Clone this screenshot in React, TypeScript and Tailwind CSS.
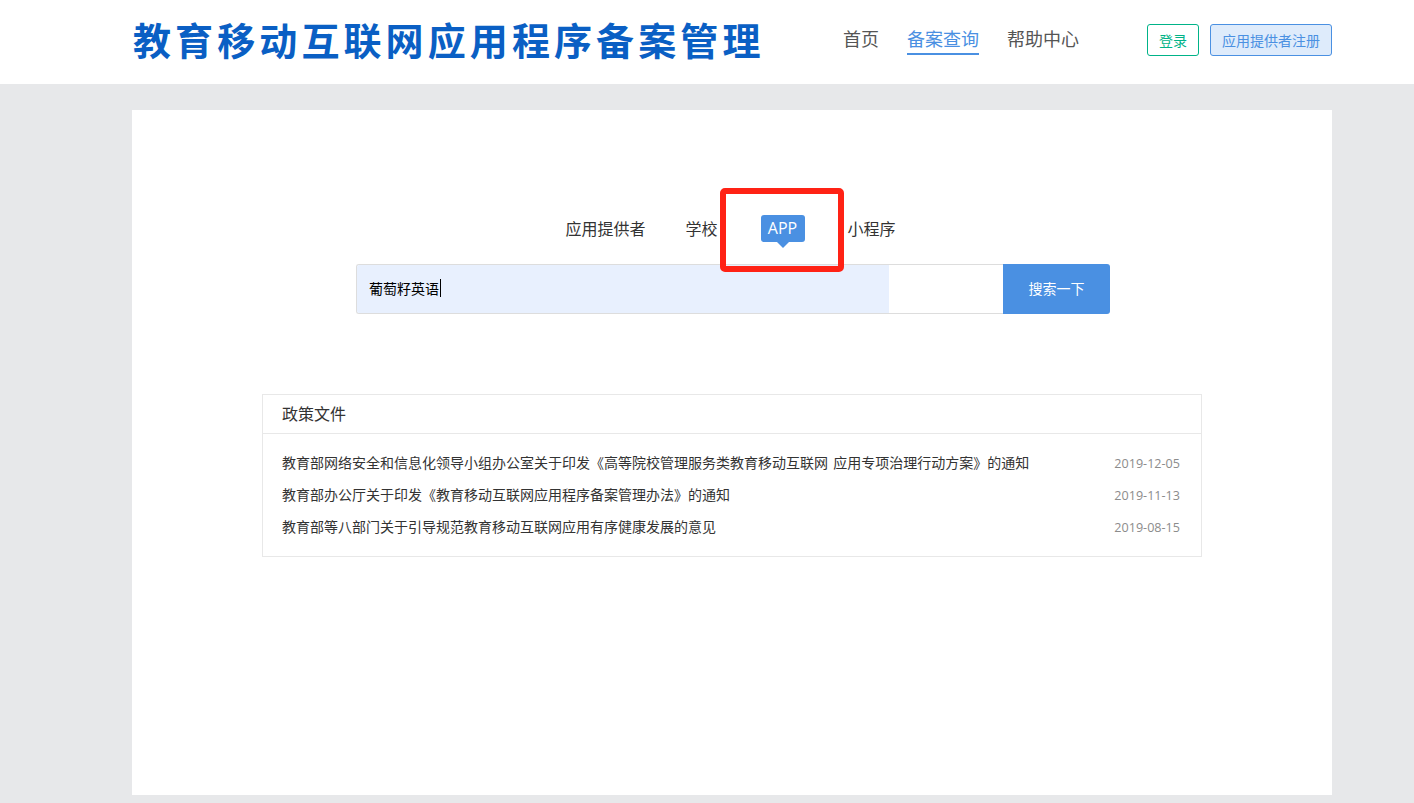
import React from 'react';

const cjk = "font-['Noto_Sans_CJK_SC','Liberation_Sans',sans-serif]";

const policies = [
  {
    title: '教育部网络安全和信息化领导小组办公室关于印发《高等院校管理服务类教育移动互联网 应用专项治理行动方案》的通知',
    date: '2019-12-05',
  },
  { title: '教育部办公厅关于印发《教育移动互联网应用程序备案管理办法》的通知', date: '2019-11-13' },
  { title: '教育部等八部门关于引导规范教育移动互联网应用有序健康发展的意见', date: '2019-08-15' },
];

const Header: React.FC = () => {
  return (
    <header className="h-[84px] bg-white">
      <div className="ml-[132px] flex h-full w-[1200px] items-center pb-1">
        <h1 className="pb-0.5 pl-px text-[38px] leading-none font-bold tracking-[4.1px] whitespace-nowrap text-[#0a5fc4]">
          教育移动互联网应用程序备案管理
        </h1>
        <nav className="ml-auto flex items-start gap-7 text-lg leading-[26px] text-[#555555]">
          <a className="border-b-2 border-transparent pb-0.5">首页</a>
          <a className="border-b-2 border-[#4a90e2] pb-0.5 text-[#4a90e2]">备案查询</a>
          <a className="border-b-2 border-transparent pb-0.5">帮助中心</a>
        </nav>
        <div className="ml-[68px] flex items-center gap-[11px] text-sm">
          <button className="h-8 w-[52px] rounded-[3px] border border-[#00b388] text-[#00b388]">登录</button>
          <button className="h-8 w-[122px] rounded-[3px] border border-[#4a90e2] bg-[#deebfb] text-[#4a90e2]">
            应用提供者注册
          </button>
        </div>
      </div>
    </header>
  );
};

const SearchTabs: React.FC = () => {
  return (
    <div className="flex h-[34px] items-center justify-center pr-[3px] text-base text-[#333333]">
      <span>应用提供者</span>
      <span className="ml-10">学校</span>
      <span className="relative ml-[43px] flex h-[27px] w-11 items-center justify-center rounded-[3px] bg-[#4a90e2] font-['Open_Sans','Liberation_Sans',sans-serif] text-white">
        APP
        <span className="absolute top-full left-1/2 -ml-[6px] border-x-[6px] border-t-[6px] border-x-transparent border-t-[#4a90e2]" />
      </span>
      <span className="ml-[43px]">小程序</span>
    </div>
  );
};

const SearchBar: React.FC = () => {
  return (
    <div className="mt-[19px] ml-[224px] flex h-[50px] w-[754px]">
      <div className="flex flex-1 overflow-hidden rounded-l-[3px] border border-r-0 border-[#dddddd]">
        <div className="flex w-[532px] items-center bg-[#e8f0fe] pb-0.5 pl-3 text-sm text-black">
          葡萄籽英语
          <span className="ml-px h-[18px] w-px bg-black" />
        </div>
        <div className="flex-1 bg-white" />
      </div>
      <button className="w-[107px] rounded-r-[3px] bg-[#4a90e2] pb-0.5 text-sm text-white">搜索一下</button>
    </div>
  );
};

const PolicyPanel: React.FC = () => {
  return (
    <section className="mx-auto mt-20 w-[940px] border border-[#e8e8e8]">
      <div className="flex h-[39px] items-center border-b border-[#e8e8e8] pb-0.5 pl-[19px] text-base text-[#333333]">
        政策文件
      </div>
      <ul className="pt-3 pr-[21px] pb-3.5 pl-[19px]">
        {policies.map((item) => (
          <li key={item.date} className="flex h-8 items-center justify-between">
            <span className="text-sm text-[#333333] [word-spacing:2px]">{item.title}</span>
            <span className="pt-[5px] font-['Open_Sans','Liberation_Sans',sans-serif] text-[12.6px] text-[#8c8c8c]">
              {item.date}
            </span>
          </li>
        ))}
      </ul>
    </section>
  );
};

export default function App() {
  return (
    <div className={`h-[803px] overflow-hidden bg-[#e7e8ea] ${cjk}`}>
      <Header />
      <main className="relative mt-[26px] ml-[132px] h-[685px] w-[1200px] bg-white pt-[101px]">
        <SearchTabs />
        <SearchBar />
        <PolicyPanel />
        {/* red annotation drawn over the tabs */}
        <div className="absolute top-[78px] left-[588px] h-[84px] w-[124px] rounded-[5px] border-[6px] border-[#ff2215]" />
      </main>
    </div>
  );
}
